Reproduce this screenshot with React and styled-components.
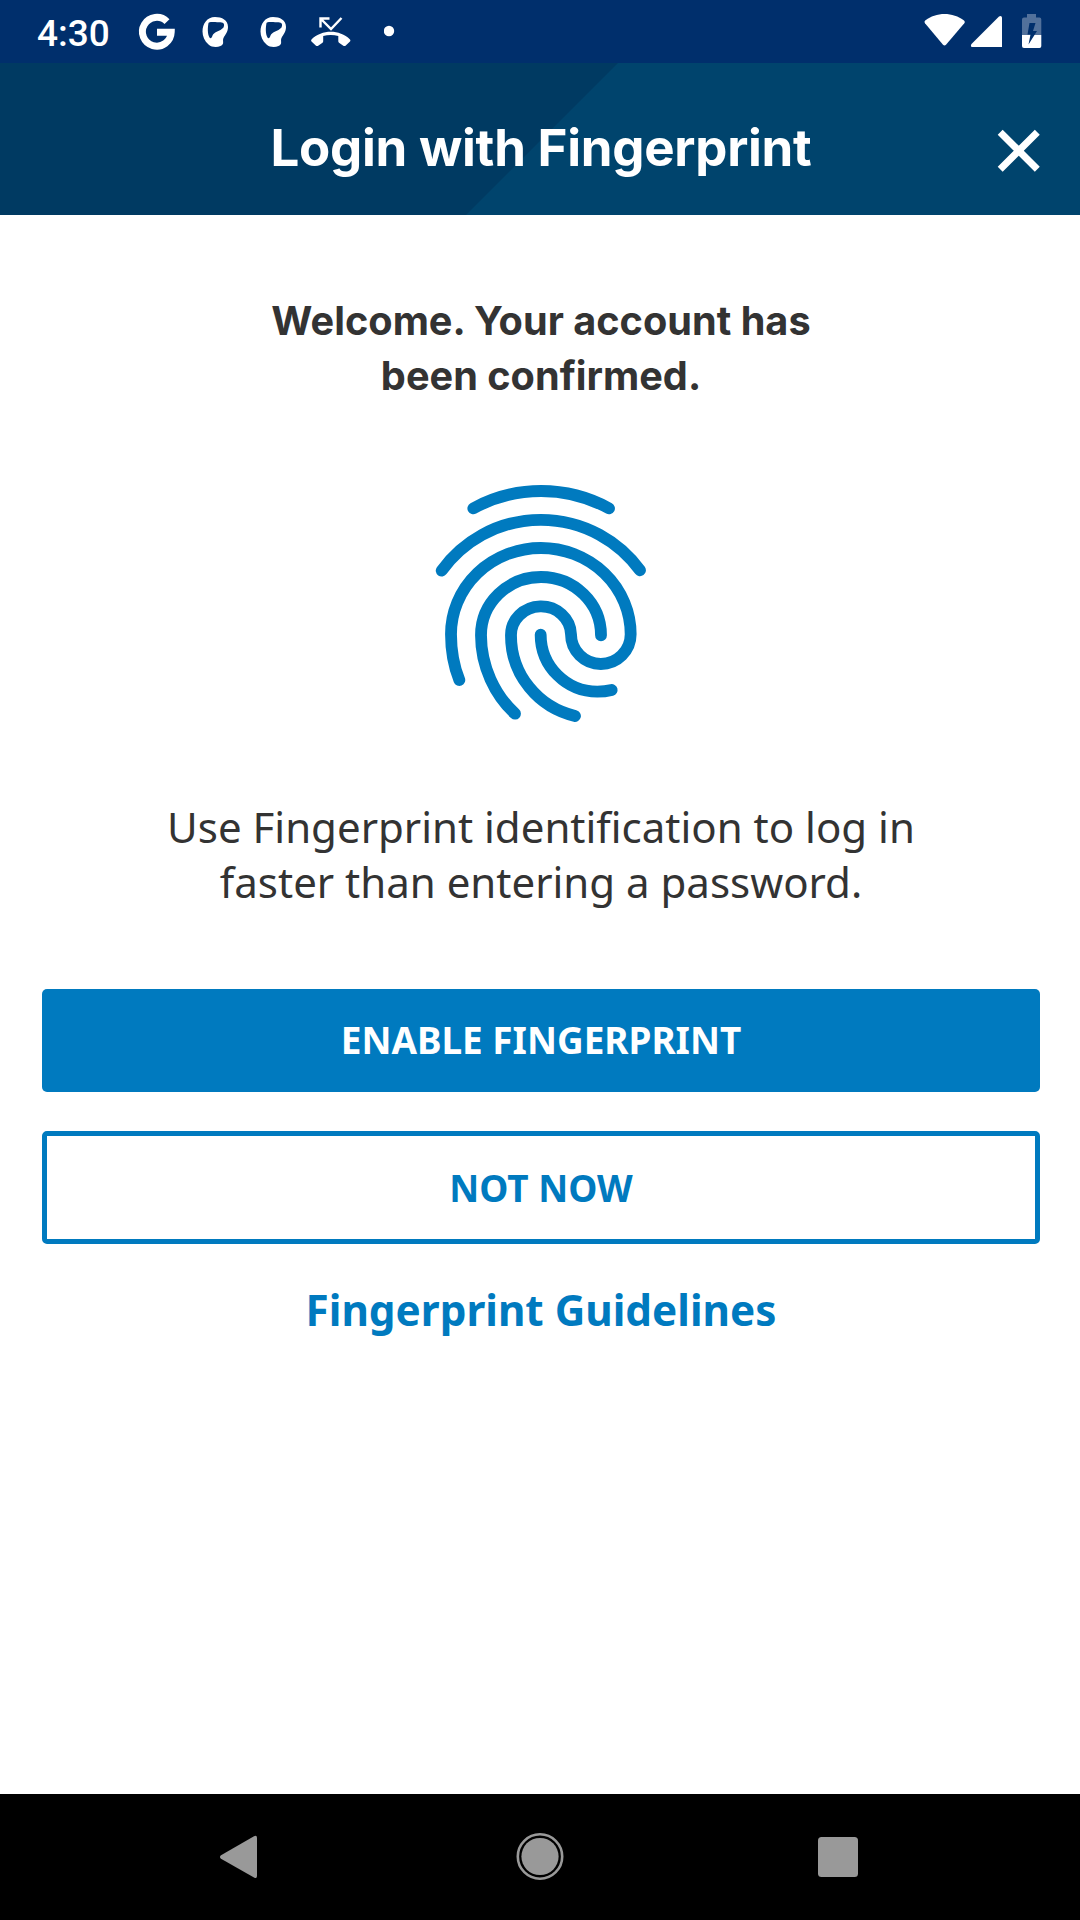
import React from "react";
import styled, { createGlobalStyle } from "styled-components";

const GlobalStyle = createGlobalStyle`
  *, *::before, *::after { box-sizing: border-box; }
  body { margin: 0; background: #fff; }
`;

const Screen = styled.div`
  display: flex;
  flex-direction: column;
  width: 1080px;
  height: 1920px;
  background: #fff;
  color: #333;
  font-family: "Noto Sans", "Open Sans", sans-serif;
  overflow: hidden;
`;

const StatusBar = styled.div`
  display: flex;
  justify-content: space-between;
  flex: none;
  height: 63px;
  padding: 0 36px 0 37px;
  background: #002f6c;
  color: #fff;
`;

const StatusGroup = styled.div`
  display: flex;
`;

const Clock = styled.time`
  width: 98px;
  font: 500 37px/67px Roboto, sans-serif;
`;

const StatusIcon = styled.svg`
  display: block;
  flex: none;
  width: ${(p) => p.$width}px;
  height: 63px;
  fill: #fff;
`;

const Header = styled.header`
  display: grid;
  grid-template-columns: 1fr auto 1fr;
  align-items: start;
  flex: none;
  height: 152px;
  background: linear-gradient(135deg, #003a62 436.5px, #00446d 437.5px);
  color: #fff;
`;

const Title = styled.h1`
  grid-column: 2;
  margin: 55px 0 0;
  padding-left: 2px;
  font: 700 51px/60px Inter, sans-serif;
  letter-spacing: -0.25px;
`;

const CloseButton = styled.button`
  justify-self: end;
  margin: 61px 34px 0 0;
  padding: 0;
  border: 0;
  background: none;
  line-height: 0;
`;

const Content = styled.main`
  display: flex;
  flex-direction: column;
  align-items: center;
  flex: 1;
  padding: 79px 40px 0 42px;
`;

const Welcome = styled.h2`
  margin: 0;
  font: 700 39.7px/55px Inter, sans-serif;
  text-align: center;
`;

const Fingerprint = styled.svg`
  display: block;
  flex: none;
  width: 280px;
  height: 280px;
  margin: 56px 2px 59px 0;
  fill: none;
  stroke: #007abf;
  stroke-width: 35.5;
  stroke-linecap: round;
`;

const Description = styled.p`
  margin: 0 0 80px;
  font-size: 42px;
  line-height: 55px;
  text-align: center;
`;

const Actions = styled.div`
  display: flex;
  flex-direction: column;
  align-self: stretch;
  gap: 39px;
`;

const Button = styled.button`
  height: ${(p) => (p.$outlined ? 113 : 103)}px;
  padding: ${(p) => (p.$outlined ? "0" : "0 0 2px")};
  border: ${(p) => (p.$outlined ? "5px solid #007abf" : "0")};
  border-radius: 5px;
  background: ${(p) => (p.$outlined ? "#fff" : "#007abf")};
  color: ${(p) => (p.$outlined ? "#007abf" : "#fff")};
  font: 700 36.9px/50px "Noto Sans", sans-serif;
`;

const GuidelinesLink = styled.a`
  margin-top: 38px;
  color: #007abf;
  font-size: 42.25px;
  font-weight: 700;
  line-height: 55px;
`;

const NavBar = styled.nav`
  display: flex;
  justify-content: space-between;
  align-items: center;
  flex: none;
  height: 126px;
  padding: 0 222px 0 219px;
  background: #000;
`;

const NavIcon = styled.svg`
  display: block;
  width: ${(p) => p.$width}px;
  height: 48px;
  fill: #999;
`;

function BlobIcon({ width }) {
  return (
    <StatusIcon $width={width} viewBox={`0 0 ${width} 63`}>
      <path
        fillRule="evenodd"
        d="M15 17C22 17 28 20 28 27C28 32 25 35 23.5 38C22 41 25 44 20.5 46C17 47.5 12 47.5 8.500 44.500C4.500 41 2.500 36 2.500 31.500C2.500 24 7 17 15 17ZM8.500 23C7.500 28 7.500 34 9.500 37.500C10.500 39.300 12 37.500 12.500 35.500C14 31.500 20 31.500 23.500 27.500C25.300 23.500 23 22.300 19 22.300C14 22.300 9.500 21.500 8.500 23Z"
      />
    </StatusIcon>
  );
}

export default function App() {
  return (
    <Screen>
      <GlobalStyle />
      <StatusBar>
        <StatusGroup>
          <Clock>4:30</Clock>
          <StatusIcon $width={65} viewBox="0 0 65 63">
            <path
              d="M32 21.600A14.400 14.400 0 1 0 36.200 32.200H22"
              fill="none"
              stroke="#fff"
              strokeWidth="7"
            />
          </StatusIcon>
          <BlobIcon width={58} />
          <BlobIcon width={50} />
          <StatusIcon $width={76} viewBox="0 0 76 63">
            <path
              d="M12.500 27.500V18.500H21.500M12.500 18.500L23 29L33.500 18"
              fill="none"
              stroke="#fff"
              strokeWidth="2.4"
            />
            <path d="M3.500 39.500C14 29.300 31.500 29.300 42 39.500C42.500 40.200 42.500 41 42 41.500L37.500 45.700C36.900 46.200 36 46.200 35.300 45.700L31 42.800C30.500 42.300 30.300 41.800 30.300 41.200V36C25.500 34.500 20 34.500 15.200 36V41.200C15.200 41.800 15 42.300 14.500 42.800L10.200 45.700C9.500 46.200 8.600 46.200 8 45.700L3.500 41.500C3 41 3 40.200 3.500 39.500Z" />
          </StatusIcon>
          <StatusIcon $width={20} viewBox="0 0 20 63">
            <circle cx="5" cy="31" r="5.200" />
          </StatusIcon>
        </StatusGroup>
        <StatusGroup>
          <StatusIcon $width={48} viewBox="922 0 48 63">
            <path d="M925.200 20.500C936 11.800 953 11.800 964 20.500C965 21.500 965 22.300 964.300 23.200L946 44.700C945 45.800 944 45.800 943 44.700L925 23.200C924.300 22.300 924.300 21.300 925.200 20.500Z" />
          </StatusIcon>
          <StatusIcon $width={48} viewBox="970 0 48 63">
            <path d="M971.500 44L999 16.500C1000.500 15.300 1002 16 1002 18V47H972C970.800 47 970.600 45 971.500 44Z" />
          </StatusIcon>
          <StatusIcon $width={26} viewBox="1018 0 26 63">
            <path
              opacity="0.32"
              d="M1027 14H1036V17.500H1039.500Q1041.300 17.500 1041.300 19.500V35H1022V19.500Q1022 17.500 1024 17.500H1027Z"
            />
            <path d="M1022 35H1041.300V46Q1041.300 48 1039.500 48H1024Q1022 48 1022 46Z" />
            <path
              fill="#002f6c"
              d="M1029.500 23H1035.500L1033 31H1037L1028.500 44.500L1030.500 34.500H1027.500Z"
            />
          </StatusIcon>
        </StatusGroup>
      </StatusBar>

      <Header>
        <Title>Login with Fingerprint</Title>
        <CloseButton aria-label="Close">
          <svg width="54" height="54" viewBox="0 0 54 54">
            <path
              d="M8.200 8.200L45.300 45.300M45.300 8.200L8.200 45.300"
              stroke="#fff"
              strokeWidth="7"
            />
          </svg>
        </CloseButton>
      </Header>

      <Content>
        <Welcome>
          Welcome. Your account has
          <br />
          been confirmed.
        </Welcome>
        <Fingerprint viewBox="0 0 840 840">
          <path d="M220 145A424 424 0 0 1 627 145" />
          <path d="M125 332A367 367 0 0 1 720 331" />
          <path d="M178 660C161 618 153 570 153 523A269.500 259 0 0 1 692 523A89.500 89 0 0 1 513 523A90 86 0 0 0 333 527C333 645 415 742 525 768" />
          <path d="M603 526A180 175 0 0 0 243 526C243 620 285 706 345 761" />
          <path d="M422 524C422 620 500 695 592 695Q615 695 635 690" />
        </Fingerprint>
        <Description>
          Use Fingerprint identification to log in
          <br />
          faster than entering a password.
        </Description>
        <Actions>
          <Button>ENABLE FINGERPRINT</Button>
          <Button $outlined>NOT NOW</Button>
        </Actions>
        <GuidelinesLink>Fingerprint Guidelines</GuidelinesLink>
      </Content>

      <NavBar>
        <NavIcon $width={38} viewBox="0 0 38 48">
          <path d="M35 3.200Q38 1.800 38 5V43Q38 46 35 44.500L2 25.800Q0 24 2 22.300Z" />
        </NavIcon>
        <NavIcon $width={52} viewBox="-4 0 52 48">
          <circle cx="24" cy="23.500" r="18.600" />
          <circle cx="24" cy="23.500" r="22.200" fill="none" stroke="#999" strokeWidth="2.600" />
        </NavIcon>
        <NavIcon $width={40} viewBox="0 0 40 48">
          <rect y="4" width="40" height="40" rx="3.500" />
        </NavIcon>
      </NavBar>
    </Screen>
  );
}
